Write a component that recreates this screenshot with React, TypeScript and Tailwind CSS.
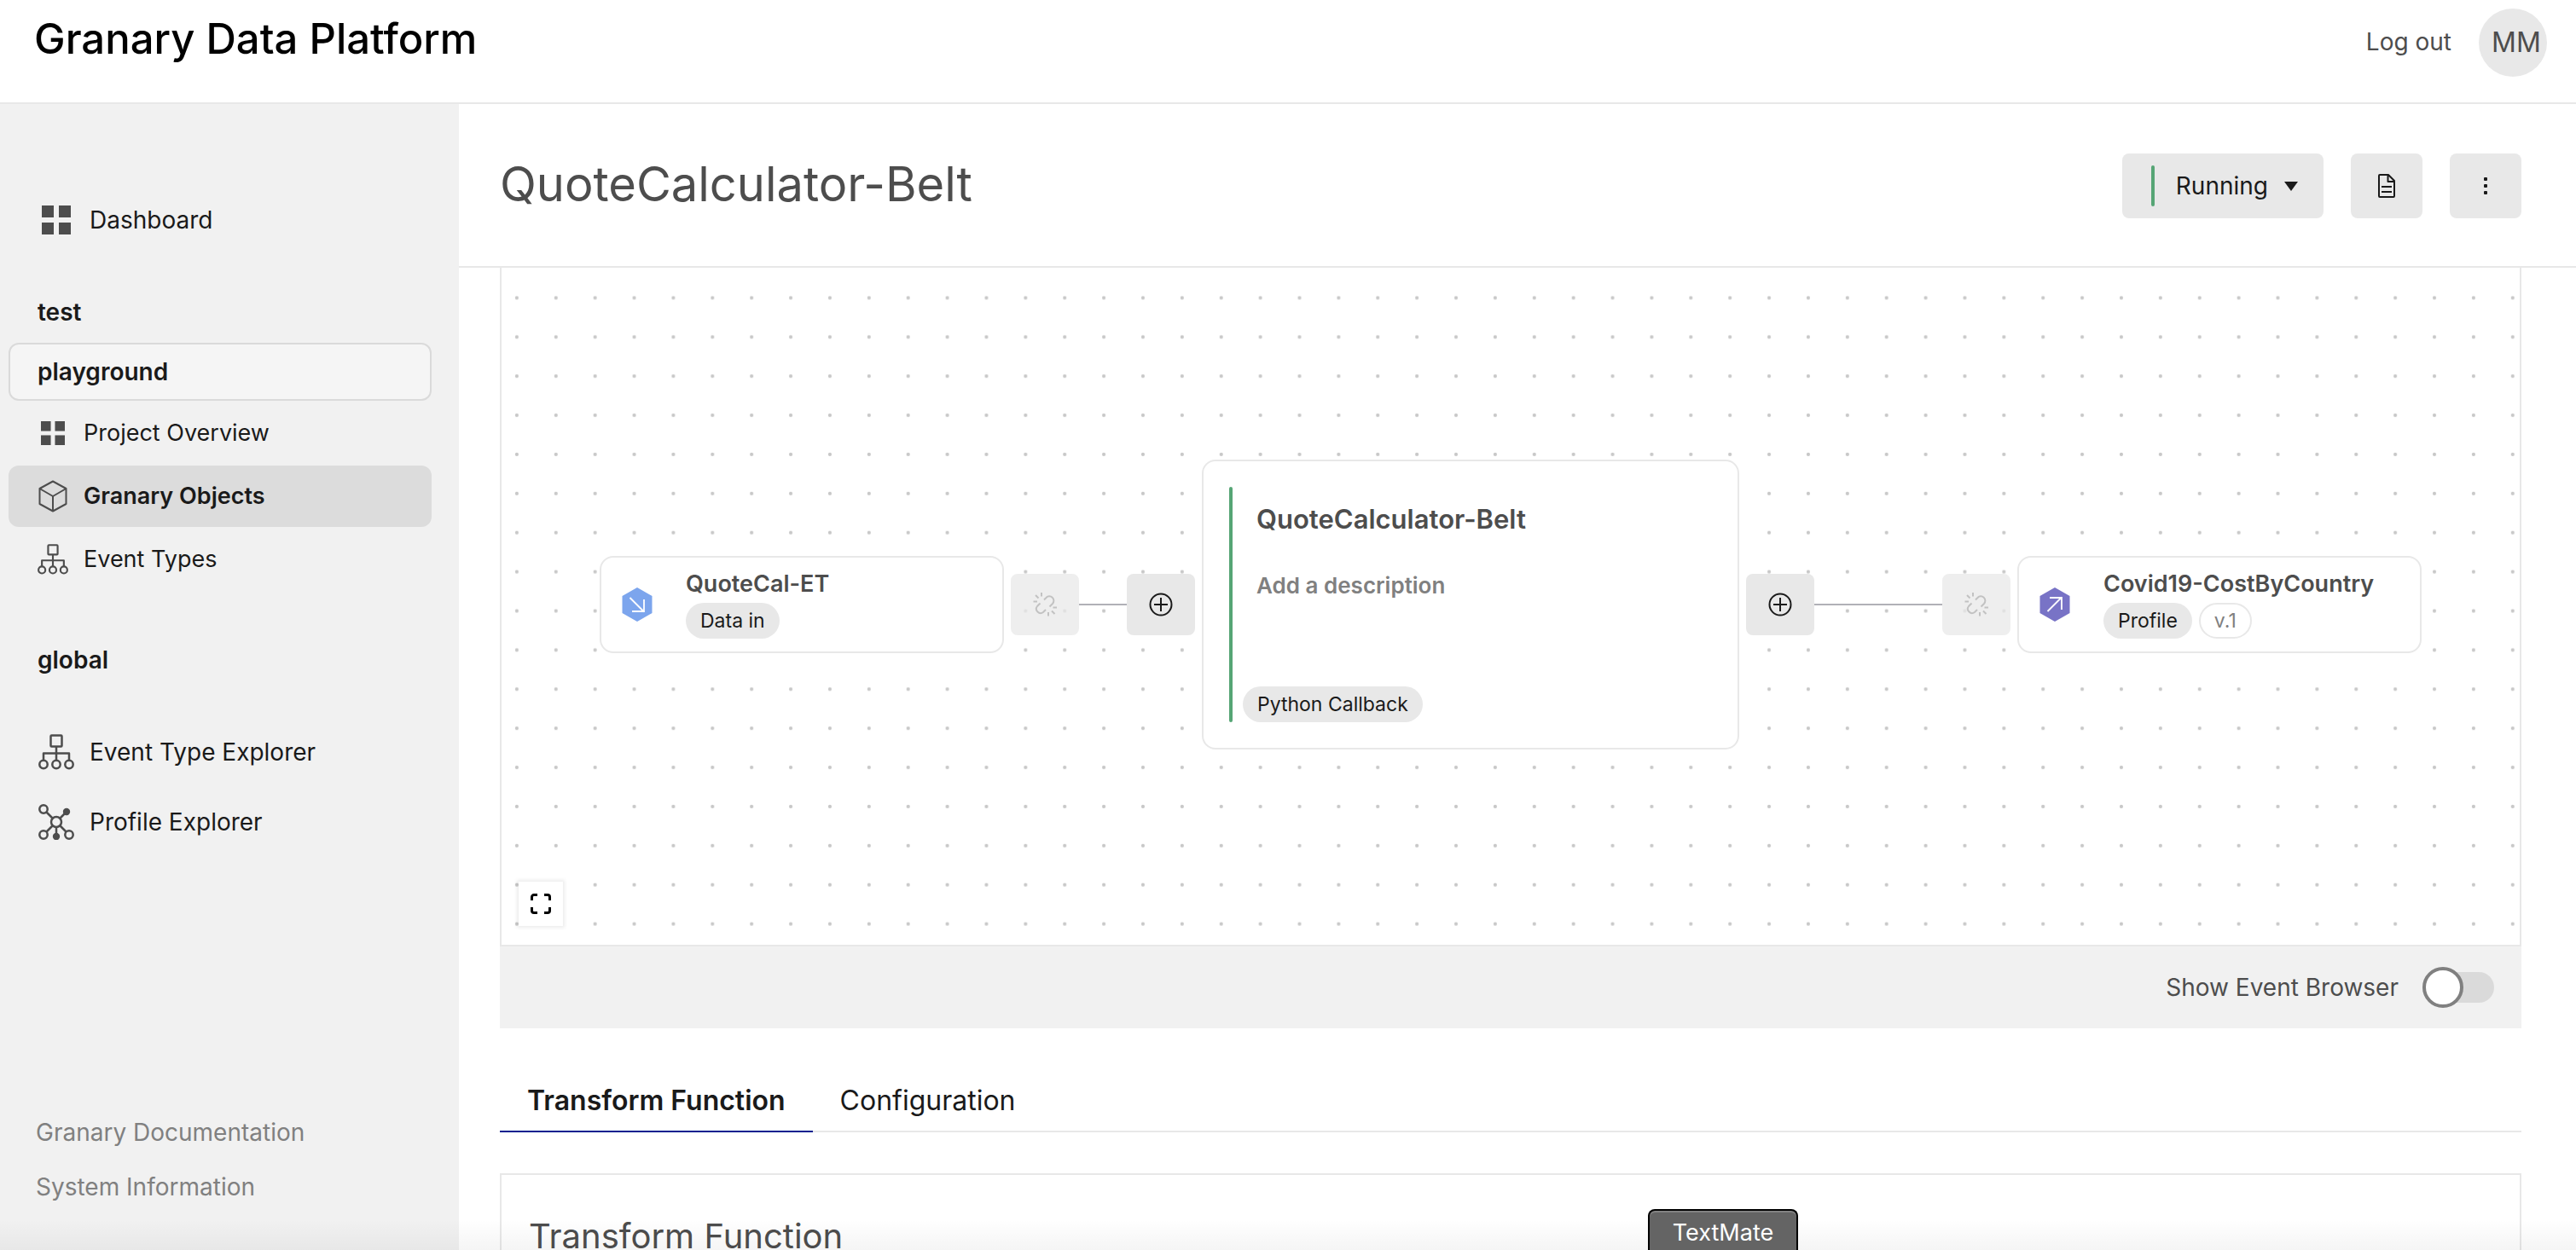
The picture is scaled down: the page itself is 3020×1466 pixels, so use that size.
import React from "react";

type IconProps = { className?: string };

const GridIcon = ({ className }: IconProps) => (
  <svg className={className} viewBox="0 0 34 34" fill="#4d4d4d" aria-hidden="true">
    <rect x="0" y="0" width="14" height="14" />
    <rect x="20" y="0" width="14" height="14" />
    <rect x="0" y="20" width="14" height="14" />
    <rect x="20" y="20" width="14" height="14" />
  </svg>
);

const CubeIcon = ({ className }: IconProps) => (
  <svg className={className} viewBox="0 0 36 38" fill="none" stroke="#4d4d4d" strokeWidth="2" strokeLinejoin="round" aria-hidden="true">
    <path d="M18 1.5 33.5 10v18L18 36.5 2.5 28V10zM2.5 10 18 19l15.500-9M18 19v17.500" />
  </svg>
);

const TreeIcon = ({ className }: IconProps) => (
  <svg className={className} viewBox="0 0 42 42" fill="none" stroke="#4d4d4d" strokeWidth="2.500" strokeLinejoin="round" aria-hidden="true">
    <rect x="14.500" y="1.500" width="13" height="13" rx="1" />
    <path d="M21 14.500v16M6 30.500v-8h30v8" />
    <circle cx="6" cy="35.500" r="4.700" />
    <circle cx="21" cy="35.500" r="4.700" />
    <circle cx="36" cy="35.500" r="4.700" />
  </svg>
);

const NetworkIcon = ({ className }: IconProps) => (
  <svg className={className} viewBox="0 0 42 42" fill="none" stroke="#4d4d4d" strokeWidth="2.500" aria-hidden="true">
    <circle cx="21" cy="21" r="6" />
    <circle cx="6" cy="6" r="4.700" />
    <circle cx="6" cy="36" r="4.700" />
    <circle cx="36" cy="36" r="4.700" />
    <circle cx="33" cy="9" r="4.200" fill="#4d4d4d" stroke="none" />
    <circle cx="21" cy="38" r="4.200" fill="#4d4d4d" stroke="none" />
    <path d="m9.500 9.500 7 7M32 10l-6.500 6.500M9.500 32.500l7-7M32.500 32.500l-7-7M21 27v9" />
  </svg>
);

const HexIcon = ({ color, up }: { color: string; up?: boolean }) => (
  <svg className="h-10 w-9 shrink-0" viewBox="0 0 36 40" fill="none" aria-hidden="true">
    <path d="M18 0 35.500 10v20L18 40 .5 30V10z" fill={color} />
    <path d={up ? "M9.500 28 26 11.500M12 12h14v14" : "M9.500 12 26 28.500M12 28h14V14"} stroke="#fff" strokeWidth="1.800" />
  </svg>
);

const BrokenLinkIcon = () => (
  <svg className="h-7 w-7" viewBox="0 0 28 28" fill="none" stroke="#c2c2c2" strokeWidth="2" aria-hidden="true">
    <path d="M13 8.500 15.500 6a5 5 0 0 1 7.500 7l-3.500 3.500M8.500 12.500 5 16a5 5 0 0 0 7 7l3-3M10 0v4.500M3 3l3.500 3.500M.5 10.500H5M18 23v4.500M22 21.500l3.500 3.500M23.500 17.500H28" />
  </svg>
);

const PlusCircleIcon = () => (
  <svg className="h-7 w-7" viewBox="0 0 28 28" fill="none" stroke="#1a1a1a" strokeWidth="2" aria-hidden="true">
    <circle cx="14" cy="14" r="12.500" />
    <path d="M14 6v16M6 14h16" />
  </svg>
);

const DocumentIcon = () => (
  <svg className="h-7 w-5" viewBox="0 0 20 28" fill="none" stroke="#1a1a1a" strokeWidth="2" strokeLinejoin="round" aria-hidden="true">
    <path d="M1 2a1 1 0 0 1 1-1h10l7 7v18a1 1 0 0 1-1 1H2a1 1 0 0 1-1-1zM11.500 1v8H19M4 15h12M4 21h12" />
  </svg>
);

const ExpandIcon = () => (
  <svg className="h-6 w-6" viewBox="0 0 24 24" fill="none" stroke="#000" strokeWidth="3" aria-hidden="true">
    <path d="M1.500 8V4a2.500 2.500 0 0 1 2.500-2.500h4M16 1.500h4A2.500 2.500 0 0 1 22.500 4v4M22.500 16v4a2.500 2.500 0 0 1-2.500 2.500h-4M8 22.500H4A2.500 2.500 0 0 1 1.500 20v-4" />
  </svg>
);

const Pill = ({ children, outlined }: { children: React.ReactNode; outlined?: boolean }) => (
  <span
    className={
      outlined
        ? "flex h-[42px] items-center rounded-full border-2 border-[#e8e8e8] bg-white px-4 text-[23px] text-[#808080]"
        : "flex h-[42px] items-center rounded-full bg-[#e8e8e8] px-[17px] text-[23px] text-[#1a1a1a]"
    }
  >
    {children}
  </span>
);

const AddButton = () => (
  <button aria-label="Add connection" className="flex h-[72px] w-20 shrink-0 items-center justify-center rounded-lg bg-[#e8e8e8]">
    <PlusCircleIcon />
  </button>
);

const UnlinkButton = () => (
  <button aria-label="Remove connection" disabled className="flex h-[72px] w-20 shrink-0 items-center justify-center rounded-lg bg-[#e8e8e8]/75">
    <BrokenLinkIcon />
  </button>
);

type EndNodeProps = { color: string; up?: boolean; title: string; children: React.ReactNode };

const EndNode = ({ color, up, title, children }: EndNodeProps) => (
  <article className="flex h-[114px] w-[474px] shrink-0 items-center gap-[39px] rounded-2xl border-2 border-[#e8e8e8] bg-white pl-6">
    <HexIcon color={color} up={up} />
    <div className="pb-0.5">
      <h3 className="text-[27px] leading-9 font-semibold">{title}</h3>
      <div className="mt-1 flex gap-2">{children}</div>
    </div>
  </article>
);

const DotGrid = () => (
  <svg className="absolute inset-0 h-full w-full" aria-hidden="true">
    <defs>
      <pattern id="dots" x="-5" y="12.500" width="45.880" height="45.890" patternUnits="userSpaceOnUse">
        <circle cx="22.900" cy="22.900" r="2.100" fill="#c8c8c8" />
      </pattern>
    </defs>
    <rect width="100%" height="100%" fill="url(#dots)" />
  </svg>
);

const Sidebar = () => (
  <aside className="flex w-[538px] shrink-0 flex-col bg-[#f1f1f1] text-[#1a1a1a]">
    <nav className="flex grow flex-col pt-[104px] pr-8 pl-[10px]">
      <a href="#dashboard" className="flex h-16 items-center gap-[22px] pl-[39px] text-[28px]">
        <GridIcon className="h-[34px] w-[34px]" />
        Dashboard
      </a>
      <a href="#test" className="mt-10 flex h-[72px] items-center pl-[34px] text-[28px] font-semibold">
        test
      </a>
      <a href="#playground" className="flex h-[68px] items-center rounded-xl border-2 border-[#dadada] bg-[#f5f5f5] pl-8 text-[28px] font-semibold">
        playground
      </a>
      <a href="#overview" className="mt-0.5 flex h-[72px] items-center gap-[22px] pl-[38px] text-[27px]">
        <GridIcon className="h-7 w-7" />
        Project Overview
      </a>
      <a href="#objects" aria-current="page" className="mt-0.5 flex h-[72px] items-center gap-[18px] rounded-xl bg-[#dcdcdc] pl-[34px] text-[27px] font-semibold">
        <CubeIcon className="h-[38px] w-9" />
        Granary Objects
      </a>
      <a href="#types" className="mt-0.5 flex h-[72px] items-center gap-[18px] pl-[34px] text-[27px]">
        <TreeIcon className="h-9 w-9" />
        Event Types
      </a>
      <h2 className="mt-[50px] flex h-16 items-center pl-[34px] text-[28px] font-semibold">global</h2>
      <a href="#type-explorer" className="mt-[35px] flex h-[82px] items-center gap-[18px] pl-[35px] text-[28px]">
        <TreeIcon className="h-[42px] w-[42px]" />
        Event Type Explorer
      </a>
      <a href="#profile-explorer" className="flex h-[82px] items-center gap-[18px] pl-[35px] text-[28px]">
        <NetworkIcon className="h-[42px] w-[42px]" />
        Profile Explorer
      </a>
    </nav>
    <footer className="flex flex-col pb-[42px] pl-[42px] text-[28px] leading-[64px] text-[#808080]">
      <a href="#docs">Granary Documentation</a>
      <a href="#system">System Information</a>
    </footer>
  </aside>
);

const Flow = () => (
  <section aria-label="Data flow" className="relative flex h-[796px] shrink-0 items-center justify-center border-2 border-t-0 border-[#e8e8e8] pb-1">
    <DotGrid />
    <div className="relative flex items-center">
      <EndNode color="#7ca5ed" title="QuoteCal-ET">
        <Pill>Data in</Pill>
      </EndNode>
      <div className="flex items-center px-2">
        <UnlinkButton />
        <div className="h-0.5 w-14 bg-[#b1b1b7]" />
        <AddButton />
      </div>
      <article className="flex h-[340px] w-[630px] shrink-0 rounded-2xl border-2 border-[#e8e8e8] bg-white p-[30px]">
        <div className="w-1 rounded-full bg-[#56a575]" />
        <div className="flex flex-col items-start pl-3">
          <h2 className="mt-[18px] pl-4 text-[31px] leading-10 font-semibold">QuoteCalculator-Belt</h2>
          <button className="mt-10 pl-4 text-[26px] leading-9 font-semibold text-[#808080]">Add a description</button>
          <div className="mt-auto">
            <Pill>Python Callback</Pill>
          </div>
        </div>
      </article>
      <div className="flex items-center px-2">
        <AddButton />
        <div className="h-0.5 w-[150px] bg-[#b1b1b7]" />
        <UnlinkButton />
      </div>
      <EndNode color="#7873c6" up title="Covid19-CostByCountry">
        <Pill>Profile</Pill>
        <Pill outlined>v.1</Pill>
      </EndNode>
    </div>
    <button aria-label="Full screen" className="absolute bottom-[22px] left-5 flex h-[52px] w-[52px] items-center justify-center bg-white shadow-[0_0_4px_2px_rgba(0,0,0,0.08)]">
      <ExpandIcon />
    </button>
  </section>
);

export default function App() {
  return (
    <div className="relative flex h-screen flex-col overflow-hidden bg-white font-['Inter',sans-serif] text-[#4d4d4d]">
      <header className="flex h-[122px] shrink-0 items-start justify-between border-b-2 border-[#e8e8e8] pr-[34px] pl-10">
        <h1 className="mt-2 text-[49px] leading-[76px] font-medium text-black">Granary Data Platform</h1>
        <div className="mt-[10px] flex items-center gap-8">
          <a href="#logout" className="pb-0.5 text-[28px]">Log out</a>
          <span className="flex h-20 w-20 items-center justify-center rounded-full bg-[#e8e8e8] pl-2 text-[32px]">MM</span>
        </div>
      </header>
      <div className="flex min-h-0 grow">
        <Sidebar />
        <main className="flex min-w-0 grow flex-col">
          <div className="flex h-[192px] shrink-0 items-center justify-between border-b-2 border-[#e8e8e8] pt-0.5 pr-16 pl-12">
            <h2 className="pb-1 text-[56px] leading-[72px]">QuoteCalculator-Belt</h2>
            <div className="flex gap-8 text-[#1a1a1a]">
              <button className="flex h-[76px] items-center rounded-lg bg-[#e8e8e8] pr-[30px] pl-[34px] text-[28px]">
                <span className="mr-[25px] h-12 w-1 rounded-full bg-[#56a575]" />
                Running
                <svg className="ml-[19px] h-[11px] w-4" viewBox="0 0 16 11" aria-hidden="true">
                  <path d="M0 0h16L8 11z" fill="#1a1a1a" />
                </svg>
              </button>
              <button aria-label="Log" className="flex h-[76px] w-[84px] items-center justify-center rounded-lg bg-[#e8e8e8]">
                <DocumentIcon />
              </button>
              <button aria-label="More" className="flex h-[76px] w-[84px] items-center justify-center rounded-lg bg-[#e8e8e8]">
                <svg className="h-5 w-1" viewBox="0 0 4 20" fill="#1a1a1a" aria-hidden="true">
                  <rect width="4" height="4" rx="1" />
                  <rect y="8" width="4" height="4" rx="1" />
                  <rect y="16" width="4" height="4" rx="1" />
                </svg>
              </button>
            </div>
          </div>
          <div className="flex min-h-0 grow flex-col overflow-hidden pr-16 pl-12">
            <Flow />
            <div className="flex h-24 shrink-0 items-center justify-end bg-[#f1f1f1] pr-8">
              <label className="flex items-center gap-7 text-[28px]">
                Show Event Browser
                <span className="relative flex h-12 w-[84px] items-center">
                  <input type="checkbox" role="switch" className="peer h-9 w-full appearance-none rounded-full bg-[#dadada]" />
                  <span className="absolute left-0 h-12 w-12 rounded-full border-4 border-[#808080] bg-white peer-checked:left-9" />
                </span>
              </label>
            </div>
            <div role="tablist" className="mt-12 flex h-[74px] shrink-0 items-stretch border-b-2 border-[#e8e8e8] text-[32px] text-[#1a1a1a]">
              <button role="tab" aria-selected="true" className="-mb-0.5 border-b-2 border-[#00208f] px-8 pt-0.5 font-semibold">
                Transform Function
              </button>
              <button role="tab" aria-selected="false" className="px-8 pt-0.5">
                Configuration
              </button>
            </div>
            <section className="mt-12 shrink-0 border-2 border-[#e8e8e8] px-8 pt-12 pb-12">
              <h2 className="text-[40px] leading-[48px]">Transform Function</h2>
            </section>
          </div>
        </main>
      </div>
      <div className="pointer-events-none absolute inset-x-0 bottom-0 h-9 bg-linear-to-t from-black/4 to-transparent" />
      <div role="tooltip" className="absolute bottom-0 left-[1932px] h-12 w-[176px] rounded-t-lg border-2 border-b-0 border-black bg-[#646464] text-center text-[27px] leading-[52px] text-white shadow-[inset_0_2px_0_#828282]">
        TextMate
      </div>
    </div>
  );
}
